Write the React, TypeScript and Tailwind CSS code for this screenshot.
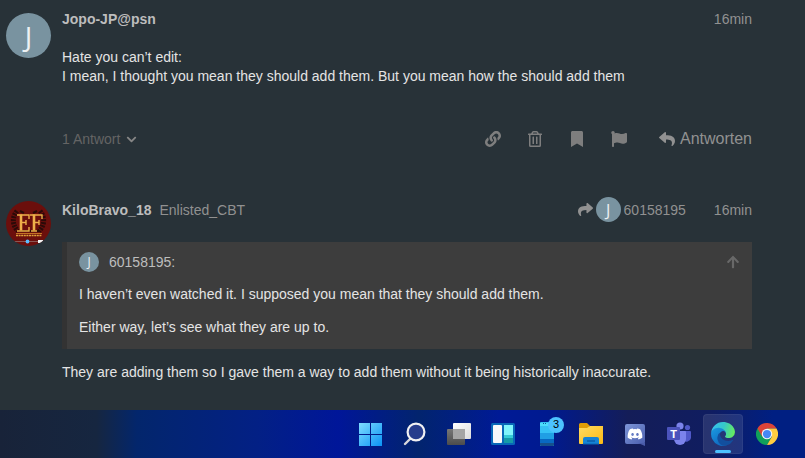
import React from 'react';
import {
  FaArrowUp,
  FaBookmark,
  FaChevronDown,
  FaDiscord,
  FaFlag,
  FaLink,
  FaRegTrashAlt,
  FaReply,
  FaShare,
} from 'react-icons/fa';

const postActions = [
  { icon: FaLink, label: 'Link' },
  { icon: FaRegTrashAlt, label: 'Löschen' },
  { icon: FaBookmark, label: 'Lesezeichen' },
  { icon: FaFlag, label: 'Melden' },
];

const ClanAvatar = () => (
  <svg viewBox="0 0 45 45" className="w-[45px] h-[45px] mt-1 shrink-0" aria-label="KiloBravo_18">
    <defs>
      <clipPath id="clan">
        <circle cx="22.5" cy="22.5" r="22.5" />
      </clipPath>
    </defs>
    <g clipPath="url(#clan)">
      <rect width="45" height="45" fill="#6b0f0c" />
      <path
        d="M11 10c-5 6-5 14 1 20M34 10c5 6 5 14-1 20"
        fill="none"
        stroke="#2a0a08"
        strokeWidth="5"
        strokeDasharray="2 1"
      />
      <path d="M14 10l4 2M31 10l-4 2M12 30h22" stroke="#2a0a08" strokeWidth="2" />
      <g fill="none" stroke="#eeb04a">
        <path d="M15 13.500v16M28 13.500v16" strokeWidth="2.600" />
        <path d="M11 14h12v4M15 21.500h5M20 19v5M11 30h12v-4" strokeWidth="1.400" />
        <path d="M24 14h12v4M28 21.500h5M33 19v5M25 30h6" strokeWidth="1.400" />
      </g>
      <path d="M10 32.500h26" stroke="#d98a2b" strokeWidth=".8" />
      <path d="M10 34.500h26" stroke="#e0a23a" strokeWidth="1.600" strokeDasharray="2 .6" />
      <path d="M8 40.500h26" stroke="#a08a88" strokeWidth=".6" />
      <circle cx="21.500" cy="40.500" r="1.900" fill="#5cbcff" />
      <path d="M32 39h5v3h-5z" fill="#f3f3f3" />
    </g>
  </svg>
);

const WindowsIcon = () => (
  <svg viewBox="0 0 24 24" className="w-6 h-6">
    <defs>
      <linearGradient id="win" x1="0" y1="0" x2="1" y2="1">
        <stop offset="0" stopColor="#7fdcff" />
        <stop offset="1" stopColor="#0a93f5" />
      </linearGradient>
    </defs>
    <path d="M0 1h11v11H0zM12 1h11v11H12zM0 13h11v11H0zM12 13h11v11H12z" fill="url(#win)" />
  </svg>
);

const SearchIcon = () => (
  <svg viewBox="0 0 24 24" className="w-6 h-6">
    <path d="M7.500 16.500L2 22" stroke="#d8d8dc" strokeWidth="2.400" strokeLinecap="round" />
    <circle cx="13" cy="10" r="8.400" fill="#263c8c" stroke="#f0f0f2" strokeWidth="2.200" />
  </svg>
);

const TaskViewIcon = () => (
  <svg viewBox="0 0 24 24" className="w-6 h-6">
    <defs>
      <linearGradient id="tvFront" x1="0" y1="0" x2="1" y2="1">
        <stop offset="0" stopColor="#ffffff" />
        <stop offset="1" stopColor="#dcdcdc" />
      </linearGradient>
      <linearGradient id="tvBack" x1="0" y1="0" x2="0" y2="1">
        <stop offset="0" stopColor="#777" />
        <stop offset="1" stopColor="#4c4c4c" />
      </linearGradient>
    </defs>
    <rect y="7" width="18" height="16" rx="1" fill="url(#tvBack)" />
    <rect x="6" y="1" width="18" height="16" rx="1" fill="url(#tvFront)" />
    <path d="M6 7h12v10H6z" fill="#a5a5a5" />
  </svg>
);

const WidgetsIcon = () => (
  <svg viewBox="0 0 24 24" className="w-6 h-6">
    <rect y="1" width="24" height="22" rx="1.5" fill="#0868b8" />
    <rect x="2" y="3" width="9" height="18" rx="1" fill="#f7f8fa" />
    <path d="M13 3h9v10h-9z" fill="#7ff4fb" />
    <path d="M13 13h9v3h-9z" fill="#35cbd6" />
    <path d="M13 16h9v5h-9z" fill="#159aa8" />
  </svg>
);

const PhoneIcon = () => (
  <svg viewBox="0 0 24 24" className="w-6 h-6">
    <rect x="5" width="14" height="24" rx="1" fill="#35c1f5" />
    <path d="M5 1h14v3H5z" fill="#4cdcfb" />
    <path d="M8 1.5h4" stroke="#0b5a9a" strokeWidth="1" strokeDasharray="1 1" />
    <path d="M5 11h14v6H5z" fill="#209fe4" />
    <path d="M5 17h14v4H5z" fill="#0869c2" />
    <path d="M5 21h14v2a1 1 0 0 1-1 1H6a1 1 0 0 1-1-1z" fill="#15508c" />
  </svg>
);

const FolderIcon = () => (
  <svg viewBox="0 0 24 24" className="w-6 h-6">
    <defs>
      <linearGradient id="folder" x1="0" y1="0" x2="1" y2="1">
        <stop offset="0" stopColor="#ffdc62" />
        <stop offset="1" stopColor="#fbb914" />
      </linearGradient>
    </defs>
    <path d="M0 2.5A1.5 1.5 0 0 1 1.5 1H8l3 3-2 3H0z" fill="#e09d06" />
    <path d="M0 6h8l3-2h13v17a1 1 0 0 1-1 1H1a1 1 0 0 1-1-1z" fill="url(#folder)" />
    <path d="M4 22v-5a2 2 0 0 1 2-2h12a2 2 0 0 1 2 2v5z" fill="#1583d5" />
    <path d="M8 19h8" stroke="#0a5ca8" strokeWidth="1.5" />
    <path d="M4 22h16" stroke="#0b66b4" strokeWidth="1" />
  </svg>
);

const DiscordIcon = () => (
  <span className="relative flex w-5 h-5 items-center justify-center rounded-xs bg-linear-to-br from-[#7e96d8] to-[#4c5fae] text-white">
    <svg viewBox="0 0 20 24" className="absolute left-0 top-0 w-5 h-6">
      <path d="M13 19h7v3z" fill="#4a5ba8" />
    </svg>
    <FaDiscord className="relative w-4 h-4" />
  </span>
);

const TeamsIcon = () => (
  <svg viewBox="0 0 24 24" className="w-6 h-6">
    <circle cx="20.5" cy="5.5" r="2.6" fill="#5059c9" />
    <circle cx="13" cy="4" r="3.6" fill="#7b83eb" />
    <path d="M16 9h7a1 1 0 0 1 1 1v6a4.5 4.5 0 0 1-8 2z" fill="#5059c9" />
    <path d="M7 9h11a1 1 0 0 1 1 1v7a6 6 0 0 1-12 0z" fill="#7b83eb" />
    <rect y="5" width="13" height="13" rx="1" fill="#4b53bc" />
    <text
      x="6.5"
      y="15.5"
      textAnchor="middle"
      fontSize="11"
      fontWeight="700"
      fill="#fff"
      fontFamily="Liberation Sans, sans-serif"
    >
      T
    </text>
  </svg>
);

const EdgeIcon = () => (
  <svg viewBox="4 4 257 257" className="w-6 h-6">
    <defs>
      <linearGradient id="edgeTop" x1="0" y1=".3" x2="1" y2=".5">
        <stop offset="0" stopColor="#35c1f1" />
        <stop offset=".5" stopColor="#36c7c9" />
        <stop offset="1" stopColor="#66eb5e" />
      </linearGradient>
      <linearGradient id="edgeLeft" x1="0" y1="0" x2=".6" y2="1">
        <stop offset="0" stopColor="#1b9de2" />
        <stop offset="1" stopColor="#0f68c0" />
      </linearGradient>
    </defs>
    <path
      d="M235.68 195.46a93.73 93.73 0 0 1-10.54 4.71 101.87 101.87 0 0 1-35.9 6.46c-47.32 0-88.54-32.55-88.54-74.32A31.48 31.48 0 0 1 117.13 105c-42.8 1.8-53.8 46.4-53.8 72.53 0 73.88 68.09 81.37 82.76 81.37 7.91 0 19.84-2.3 27-4.56l1.31-.44a128.34 128.34 0 0 0 66.6-52.8 4 4 0 0 0-5.32-5.64z"
      fill="#124f9e"
    />
    <path
      d="M110.34 246.34A79.2 79.2 0 0 1 87.6 225a80.72 80.72 0 0 1 29.53-120c3.12-1.47 8.45-4.13 15.54-4a32.35 32.35 0 0 1 25.69 13 31.88 31.88 0 0 1 6.36 18.66c0-.21 24.46-79.6-80-79.6-43.9 0-80 41.66-80 78.21a130.15 130.15 0 0 0 12.11 56 128 128 0 0 0 156.38 67.11 75.55 75.55 0 0 1-62.78-8z"
      fill="url(#edgeLeft)"
    />
    <path
      d="M156.94 153.78c-.81 1.05-3.3 2.5-3.3 5.66 0 2.61 1.7 5.12 4.72 7.23 14.38 10 41.49 8.68 41.56 8.68a59.56 59.56 0 0 0 30.27-8.35 61.38 61.38 0 0 0 30.43-52.88c.26-22.41-8-37.31-11.34-43.91C228.09 28.76 182.35 4.92 132.61 4.92a128 128 0 0 0-128 126.2c.48-36.54 36.8-66.05 80-66.05 3.5 0 23.46.34 42 10.07 16.34 8.58 24.9 18.94 30.85 29.21 6.18 10.67 7.28 24.15 7.28 29.52s-2.74 13.33-7.8 19.91z"
      fill="url(#edgeTop)"
    />
  </svg>
);

const ChromeIcon = () => (
  <svg viewBox="0 0 48 48" className="w-[22px] h-[22px]">
    <path d="M24 24L3.2 12A24 24 0 0 0 24 48L34.4 30z" fill="#10a05a" />
    <path d="M24 12h20.8A24 24 0 0 0 3.2 12l10.4 18z" fill="#db4437" />
    <path d="M24 12h20.8A24 24 0 0 1 24 48l10.4-18z" fill="#ffcd40" />
    <circle cx="24" cy="24" r="11.5" fill="#f4f4f4" />
    <circle cx="24" cy="24" r="9" fill="#4688f4" />
  </svg>
);

const taskbarApps = [
  { icon: WindowsIcon, name: 'Start' },
  { icon: SearchIcon, name: 'Suche' },
  { icon: TaskViewIcon, name: 'Taskansicht' },
  { icon: WidgetsIcon, name: 'Widgets' },
  { icon: PhoneIcon, name: 'Smartphone', badge: 3 },
  { icon: FolderIcon, name: 'Explorer' },
  { icon: DiscordIcon, name: 'Discord' },
  { icon: TeamsIcon, name: 'Teams' },
  { icon: EdgeIcon, name: 'Edge', active: true },
  { icon: ChromeIcon, name: 'Chrome' },
];

const Taskbar = () => (
  <nav className="flex h-12 shrink-0 items-center justify-end gap-1 pr-[18px] bg-[linear-gradient(90deg,#182339_0%,#162640_12%,#03266c_17%,#032085_32%,#001699_42%,#02246e_52%,#001a96_62%,#001a90_68%,#141d58_78%,#101d60_88%,#001f82_96%)]">
    {taskbarApps.map((app) => (
      <button
        key={app.name}
        aria-label={app.name}
        className={`relative flex w-10 h-10 items-center justify-center rounded ${
          app.active ? 'bg-white/10 ring-1 ring-inset ring-white/5' : ''
        }`}
      >
        <app.icon />
        {app.badge && (
          <span className="absolute right-[3px] top-[3px] flex w-4 h-4 items-center justify-center rounded-full bg-[#4cc2ff] text-[11px] text-black">
            {app.badge}
          </span>
        )}
        {app.active && <span className="absolute bottom-px h-[3px] w-4 rounded-full bg-[#4cc2ff]" />}
      </button>
    ))}
  </nav>
);

const App = () => {
  return (
    <div className="flex min-h-screen flex-col bg-[#283238] font-['Liberation_Sans',Arial,sans-serif] text-sm text-[#e4e4e4]">
      <main className="flex-1 pl-[6px] pr-[53px] pt-[9px] pb-7">
        <article className="flex gap-[11px]">
          <div className="mt-1 flex w-[45px] h-[45px] shrink-0 items-center justify-center rounded-full bg-[#7993a0] font-['Open_Sans',sans-serif] text-[28px] text-[#edf1f3]">
            J
          </div>
          <div className="min-w-0 flex-1">
            <header className="flex items-center justify-between text-[#919191]">
              <a href="#jopo" className="font-bold text-[#bdbdbd]">Jopo-JP@psn</a>
              <a href="#post-1">16min</a>
            </header>
            <p className="mt-[19px] leading-[19px]">
              Hate you can’t edit:
              <br />
              I mean, I thought you mean they should add them. But you mean how the should add them
            </p>
            <div className="mt-[37px] flex h-8 items-center justify-between text-[#7e7e7e]">
              <button className="flex items-center gap-[6px] text-[#646464]">
                1 Antwort
                <FaChevronDown className="w-[11px] h-[11px] text-[#868686]" />
              </button>
              <div className="flex items-center gap-[26px]">
                {postActions.map((action) => (
                  <button key={action.label} aria-label={action.label}>
                    <action.icon className="w-4 h-4" />
                  </button>
                ))}
                <button className="ml-[6px] flex items-center gap-[5px] text-base text-[#919191]">
                  <FaReply className="w-4 h-4" />
                  Antworten
                </button>
              </div>
            </div>
          </div>
        </article>

        <article className="mt-[42px] flex gap-[11px]">
          <ClanAvatar />
          <div className="min-w-0 flex-1">
            <header className="flex items-center text-[#919191]">
              <a href="#kilobravo" className="font-bold text-[#bdbdbd]">KiloBravo_18</a>
              <span className="ml-2">Enlisted_CBT</span>
              <a href="#reply-to" className="ml-auto flex items-center gap-[3px]">
                <FaShare className="w-[15px] h-[15px]" />
                <span className="flex w-[25px] h-[25px] items-center justify-center rounded-full bg-[#7993a0] font-['Open_Sans',sans-serif] text-base text-[#edf1f3]">
                  J
                </span>
                60158195
              </a>
              <a href="#post-2" className="ml-7">16min</a>
            </header>
            <aside className="mt-5 border-l-[5px] border-[#333333] bg-[#3d3d3d] px-3 pt-[10px] pb-3 leading-[19px]">
              <div className="flex items-center text-[#bdbdbd]">
                <span className="mr-[10px] flex w-5 h-5 items-center justify-center rounded-full bg-[#7993a0] font-['Open_Sans',sans-serif] text-xs text-[#edf1f3]">
                  J
                </span>
                60158195:
                <button aria-label="Zum zitierten Beitrag" className="ml-auto text-[#686868]">
                  <FaArrowUp className="w-[14px] h-[14px]" />
                </button>
              </div>
              <blockquote className="mt-[13px] space-y-[14px]">
                <p>I haven’t even watched it. I supposed you mean that they should add them.</p>
                <p>Either way, let’s see what they are up to.</p>
              </blockquote>
            </aside>
            <p className="mt-[14px] leading-[19px]">
              They are adding them so I gave them a way to add them without it being historically inaccurate.
            </p>
          </div>
        </article>
      </main>
      <Taskbar />
    </div>
  );
};

export default App;
